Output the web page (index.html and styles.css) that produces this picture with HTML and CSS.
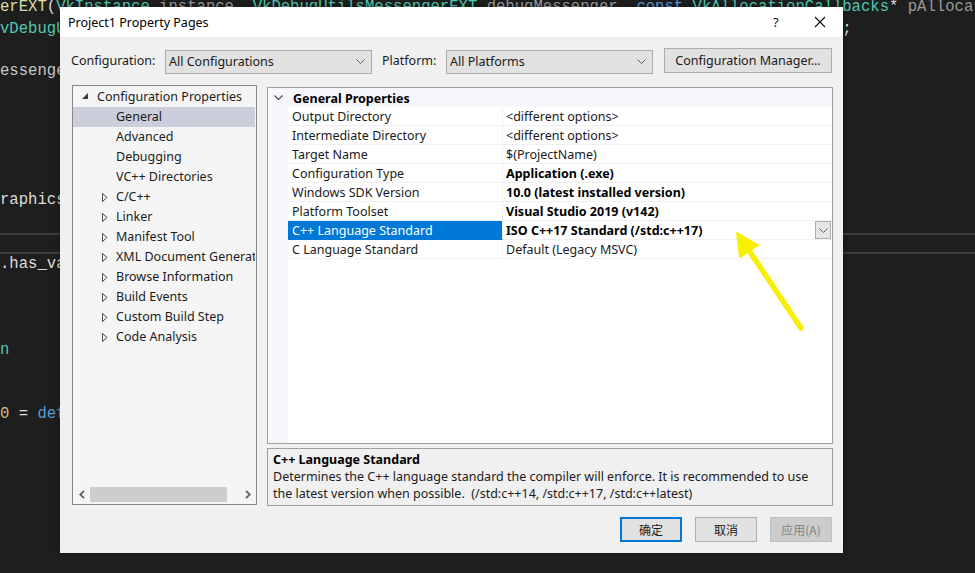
FILE: index.html
```html
<!DOCTYPE html>
<html>
<head>
<meta charset="utf-8">
<title>Project1 Property Pages</title>
<link rel="stylesheet" href="styles.css">
</head>
<body>
<div class="editor">
  <div class="ln"><span class="fn">erEXT</span>(<span class="ty">VkInstance</span> <span class="pm">instance</span>, <span class="ty">VkDebugUtilsMessengerEXT</span> <span class="pm">debugMessenger</span>, <span class="kw">const</span> <span class="ty">VkAllocationCallbacks</span>* <span class="pm">pAllocator</span>) {</div>
  <div class="ln"><span class="ty">vDebugUtilsMessengerEXT</span>)<span class="fn">vkGetInstanceProcAddr</span>(<span class="pm">instance</span>, <span class="st">"vkDestroyDebugUtilsMessengerEXT"</span>);</div>
  <div class="ln"></div>
  <div class="ln"><span class="vr">essenger, pAllocator);</span></div>
  <div class="ln"></div>
  <div class="ln"></div>
  <div class="ln"></div>
  <div class="ln"></div>
  <div class="ln"></div>
  <div class="ln">raphicsQueue;</div>
  <div class="ln"></div>
  <div class="ln sep"></div>
  <div class="ln">.has_value();</div>
  <div class="ln"></div>
  <div class="ln"></div>
  <div class="ln"></div>
  <div class="ln"><span class="ty">n</span></div>
  <div class="ln"></div>
  <div class="ln"></div>
  <div class="ln"><span class="nu">0</span> = <span class="kw">default</span>;</div>
</div>

<div class="dialog">
  <div class="titlebar">
    <span class="title">Project1 Property Pages</span>
    <span class="help">?</span>
    <span class="close"><svg width="12" height="12" viewBox="0 0 12 12"><path d="M1 1 L11 11 M11 1 L1 11" stroke="#111" stroke-width="1.1" fill="none"/></svg></span>
  </div>

  <div class="toolbar">
    <span class="lbl lbl-cfg">Configuration:</span>
    <div class="select"><span>All Configurations</span><svg class="chev" width="9" height="5" viewBox="0 0 9 5"><path d="M0.5 0.5 L4.5 4.5 L8.5 0.5" stroke="#606060" fill="none"/></svg></div>
    <span class="lbl lbl-plat">Platform:</span>
    <div class="select"><span>All Platforms</span><svg class="chev" width="9" height="5" viewBox="0 0 9 5"><path d="M0.5 0.5 L4.5 4.5 L8.5 0.5" stroke="#606060" fill="none"/></svg></div>
    <div class="btn cm">Configuration Manager...</div>
  </div>

  <div class="main">
    <div class="tree">
      <div class="tree-items">
        <div class="ti root"><svg class="tw" width="7" height="7" viewBox="0 0 7 7"><polygon points="6,0 6,6 0,6" fill="#3c3c3c"/></svg>Configuration Properties</div>
        <div class="ti child sel">General</div>
        <div class="ti child">Advanced</div>
        <div class="ti child">Debugging</div>
        <div class="ti child">VC++ Directories</div>
        <div class="ti child col"><svg class="tc" width="6" height="9" viewBox="0 0 6 9"><polygon points="0.5,0.5 5,4.5 0.5,8.5" fill="none" stroke="#4a4a4a"/></svg>C/C++</div>
        <div class="ti child col"><svg class="tc" width="6" height="9" viewBox="0 0 6 9"><polygon points="0.5,0.5 5,4.5 0.5,8.5" fill="none" stroke="#4a4a4a"/></svg>Linker</div>
        <div class="ti child col"><svg class="tc" width="6" height="9" viewBox="0 0 6 9"><polygon points="0.5,0.5 5,4.5 0.5,8.5" fill="none" stroke="#4a4a4a"/></svg>Manifest Tool</div>
        <div class="ti child col"><svg class="tc" width="6" height="9" viewBox="0 0 6 9"><polygon points="0.5,0.5 5,4.5 0.5,8.5" fill="none" stroke="#4a4a4a"/></svg>XML Document Generator</div>
        <div class="ti child col"><svg class="tc" width="6" height="9" viewBox="0 0 6 9"><polygon points="0.5,0.5 5,4.5 0.5,8.5" fill="none" stroke="#4a4a4a"/></svg>Browse Information</div>
        <div class="ti child col"><svg class="tc" width="6" height="9" viewBox="0 0 6 9"><polygon points="0.5,0.5 5,4.5 0.5,8.5" fill="none" stroke="#4a4a4a"/></svg>Build Events</div>
        <div class="ti child col"><svg class="tc" width="6" height="9" viewBox="0 0 6 9"><polygon points="0.5,0.5 5,4.5 0.5,8.5" fill="none" stroke="#4a4a4a"/></svg>Custom Build Step</div>
        <div class="ti child col"><svg class="tc" width="6" height="9" viewBox="0 0 6 9"><polygon points="0.5,0.5 5,4.5 0.5,8.5" fill="none" stroke="#4a4a4a"/></svg>Code Analysis</div>
      </div>
      <div class="hscroll">
        <span class="sarrow"><svg width="6" height="9" viewBox="0 0 6 9"><path d="M5 0.8 L1.2 4.5 L5 8.2" stroke="#606060" stroke-width="1.8" fill="none"/></svg></span>
        <span class="thumb"></span>
        <span class="strack"></span>
        <span class="sarrow"><svg width="6" height="9" viewBox="0 0 6 9"><path d="M1 0.8 L4.8 4.5 L1 8.2" stroke="#606060" stroke-width="1.8" fill="none"/></svg></span>
      </div>
    </div>

    <div class="right">
      <div class="grid">
        <div class="gh"><span class="gut"><svg width="9" height="5" viewBox="0 0 9 5"><path d="M0.5 0.5 L4.5 4.5 L8.5 0.5" stroke="#555" stroke-width="1.2" fill="none"/></svg></span><span class="ghname">General Properties</span></div>
        <div class="gr"><span class="gut"></span><span class="nm">Output Directory</span><span class="vl">&lt;different options&gt;</span></div>
        <div class="gr"><span class="gut"></span><span class="nm">Intermediate Directory</span><span class="vl">&lt;different options&gt;</span></div>
        <div class="gr"><span class="gut"></span><span class="nm">Target Name</span><span class="vl">$(ProjectName)</span></div>
        <div class="gr"><span class="gut"></span><span class="nm">Configuration Type</span><span class="vl b">Application (.exe)</span></div>
        <div class="gr"><span class="gut"></span><span class="nm">Windows SDK Version</span><span class="vl b">10.0 (latest installed version)</span></div>
        <div class="gr"><span class="gut"></span><span class="nm">Platform Toolset</span><span class="vl b">Visual Studio 2019 (v142)</span></div>
        <div class="gr selrow"><span class="gut"></span><span class="nm">C++ Language Standard</span><span class="vl b">ISO C++17 Standard (/std:c++17)<span class="ddbtn"><svg width="9" height="5" viewBox="0 0 9 5"><path d="M0.5 0.5 L4.5 4.5 L8.5 0.5" stroke="#606060" fill="none"/></svg></span></span></div>
        <div class="gr"><span class="gut"></span><span class="nm">C Language Standard</span><span class="vl">Default (Legacy MSVC)</span></div>
        <div class="gfill"><span class="gut"></span></div>
      </div>
      <div class="desc">
        <div class="dtitle">C++ Language Standard</div>
        <div class="dtext">Determines the C++ language standard the compiler will enforce. It is recommended to use the latest version when possible.&nbsp; (/std:c++14, /std:c++17, /std:c++latest)</div>
      </div>
    </div>
  </div>

  <div class="buttons">
    <div class="btn dlg default">确定</div>
    <div class="btn dlg">取消</div>
    <div class="btn dlg disabled">应用(A)</div>
  </div>
</div>

<svg class="annot" width="975" height="573" viewBox="0 0 975 573">
  <line x1="801" y1="328" x2="746" y2="246" stroke="#f7f000" stroke-width="5.5" stroke-linecap="round"/>
  <polygon points="737,233 740,257 758,245" fill="#f7f000" stroke="#f7f000" stroke-width="2" stroke-linejoin="round"/>
</svg>
</body>
</html>
```

FILE: styles.css
```css
* { box-sizing: border-box; }

html, body {
  margin: 0;
  padding: 0;
}

body {
  width: 975px;
  height: 573px;
  overflow: hidden;
  background: #1e1e1e;
  position: relative;
  font-family: "Noto Sans", "Noto Sans CJK SC", sans-serif;
  font-size: 12.5px;
  color: #1b1b1b;
}

/* ---------- code editor background ---------- */
.editor {
  margin-top: -2.7px;
  font-family: "Liberation Mono", "DejaVu Sans Mono", monospace;
  font-size: 15.6px;
  color: #dcdcdc;
}
.ln {
  height: 21.4px;
  line-height: 21.4px;
  white-space: pre;
}
.ln.sep {
  border-top: 2px solid #3d3d3d;
  border-bottom: 2px solid #3d3d3d;
}
.fn { color: #dcdcaa; }
.ty { color: #4ec9b0; }
.kw { color: #569cd6; }
.pm { color: #9a9a9a; }
.st { color: #d69d85; }
.vr { color: #c8c8c8; }
.nu { color: #d7ba7d; }

/* ---------- dialog ---------- */
.dialog {
  position: absolute;
  left: 60px;
  top: 7px;
  width: 783px;
  height: 546px;
  background: #f0f0f0;
  display: flex;
  flex-direction: column;
  box-shadow: 0 0 6px rgba(0, 0, 0, 0.35);
}

.titlebar {
  height: 30px;
  background: #ffffff;
  display: flex;
  align-items: center;
  padding-left: 8px;
  flex: none;
}
.title {
  font-size: 12.5px;
  color: #000;
  flex: 1;
}
.help {
  font-size: 13px;
  color: #111;
  width: 12px;
  margin-right: 29px;
}
.close {
  display: flex;
  margin-right: 17px;
}

.toolbar {
  margin-top: 11px;
  height: 25px;
  padding-left: 11px;
  display: flex;
  align-items: center;
  flex: none;
}
.lbl { color: #1b1b1b; }
.lbl-cfg { width: 94px; }
.lbl-plat { width: 64px; margin-left: 10px; }

.select {
  width: 207px;
  height: 24px;
  border: 1px solid #acacac;
  background: #e1e1e1;
  display: flex;
  align-items: center;
  justify-content: space-between;
  padding: 0 6px 0 3px;
  margin-top: 2px;
}
.chev { flex: none; }

.btn {
  display: flex;
  align-items: center;
  justify-content: center;
  background: #e1e1e1;
  border: 1px solid #adadad;
  color: #1b1b1b;
}
.cm {
  width: 168px;
  height: 25px;
  margin-left: 11px;
}

/* ---------- main area ---------- */
.main {
  display: flex;
  gap: 10px;
  margin-top: 12px;
  padding: 0 10px 0 12px;
  flex: none;
}

.tree {
  width: 185px;
  height: 420px;
  border: 1px solid #828790;
  background: #f5f5f5;
  display: flex;
  flex-direction: column;
  padding-top: 1px;
}
.tree-items { flex: 1; overflow: hidden; }
.ti {
  height: 20px;
  line-height: 20px;
  white-space: nowrap;
  overflow: hidden;
  position: relative;
  margin-right: 1px;
}
.ti.root { padding-left: 24px; }
.ti.child { padding-left: 43px; }
.ti.sel { background: #cccedb; }
.tw {
  position: absolute;
  left: 9px;
  top: 6px;
}
.tc {
  position: absolute;
  left: 29px;
  top: 6px;
}

.hscroll {
  height: 17px;
  margin-bottom: 1px;
  display: flex;
  align-items: center;
  flex: none;
}
.sarrow {
  width: 17px;
  height: 17px;
  display: flex;
  align-items: center;
  justify-content: center;
  flex: none;
}
.thumb {
  width: 137px;
  height: 15px;
  background: #cdcdcd;
  flex: none;
}
.strack { flex: 1; }

.right {
  width: 566px;
  margin-top: 2px;
  display: flex;
  flex-direction: column;
  gap: 4px;
}

.grid {
  height: 357px;
  border: 1px solid #a0a0a0;
  background: #ffffff;
  display: flex;
  flex-direction: column;
}
.gut {
  width: 20px;
  flex: none;
  background: #f5f7fa;
  display: flex;
  align-items: center;
  justify-content: center;
  align-self: stretch;
}
.gh {
  height: 19px;
  display: flex;
  align-items: center;
  background: #f5f7fa;
  font-weight: bold;
  color: #000;
}
.gh .gut { padding-left: 1px; }
.ghname { padding-left: 5px; padding-top: 1px; }

.gr {
  height: 19px;
  display: flex;
  align-items: stretch;
}
.nm {
  width: 215px;
  flex: none;
  padding-left: 4px;
  padding-top: 2px;
  line-height: 16px;
  border-bottom: 1px solid #f0f0f0;
  border-right: 1px solid #f0f0f0;
  white-space: nowrap;
  color: #1b1b1b;
}
.vl {
  flex: 1;
  padding-left: 3px;
  padding-top: 2px;
  line-height: 16px;
  border-bottom: 1px solid #f0f0f0;
  white-space: nowrap;
  position: relative;
  color: #1b1b1b;
}
.vl.b { font-weight: bold; color: #000; }
.selrow .nm {
  background: #0078d7;
  color: #ffffff;
  border-bottom-color: #0078d7;
}
.ddbtn {
  position: absolute;
  right: 1px;
  top: 0;
  width: 16px;
  height: 18px;
  background: #e5e5e5;
  border: 1px solid #adadad;
  display: flex;
  align-items: center;
  justify-content: center;
}
.gfill {
  flex: 1;
  display: flex;
}

.desc {
  height: 58px;
  border: 1px solid #a0a0a0;
  background: #f0f0f0;
  padding: 2px 5px;
  line-height: 17px;
}
.dtitle { font-weight: bold; color: #000; }
.dtext { color: #1b1b1b; max-width: 545px; }

/* ---------- buttons ---------- */
.buttons {
  margin-top: 11px;
  display: flex;
  justify-content: flex-end;
  gap: 13px;
  padding-right: 11px;
}
.btn.dlg {
  width: 62px;
  height: 25px;
  font-family: "Noto Sans CJK SC", "Noto Sans", sans-serif;
  font-size: 12px;
}
.btn.default { border: 2px solid #0078d7; }
.btn.disabled {
  background: #cccccc;
  border-color: #bfbfbf;
  color: #838383;
}

/* ---------- annotation arrow ---------- */
.annot {
  position: absolute;
  left: 0;
  top: 0;
  pointer-events: none;
}
```
